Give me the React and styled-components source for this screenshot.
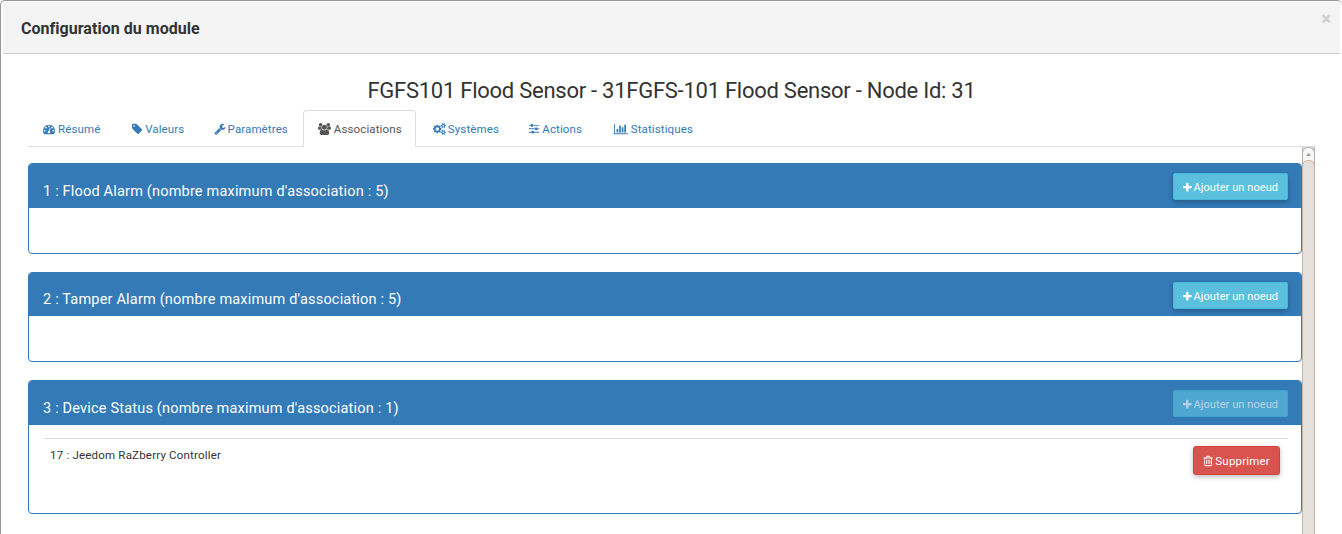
import React from 'react';
import styled, { createGlobalStyle } from 'styled-components';

const GlobalStyle = createGlobalStyle`
  * { box-sizing: border-box; }
  body {
    margin: 0;
    overflow: hidden;
    background: #fff;
    color: #333;
    font: 12px/17px Roboto, sans-serif;
  }
  h1, h2, h3, ul { margin: 0; padding: 0; font-weight: 400; }
`;

const icons = {
  plus: [1408, 'M1408 736v192q0 40-28 68t-68 28h-416v416q0 40-28 68t-68 28h-192q-40 0-68-28t-28-68v-416h-416q-40 0-68-28t-28-68v-192q0-40 28-68t68-28h416v-416q0-40 28-68t68-28h192q40 0 68 28t28 68v416h416q40 0 68 28t28 68z'],
  tag: [1664, 'M448 448q0-53-37.5-90.5t-90.5-37.5-90.5 37.5-37.5 90.5 37.5 90.5 90.5 37.5 90.5-37.5 37.5-90.5zm1067 576q0 53-37 90l-491 492q-39 37-91 37-53 0-90-37l-715-716q-38-37-64.5-101t-26.5-117v-416q0-52 38-90t90-38h416q53 0 117 26.5t102 64.5l715 714q37 39 37 91z'],
  wrench: [1728, 'M448 1472q0-26-19-45t-45-19-45 19-19 45 19 45 45 19 45-19 19-45zm644-420l-682 682q-37 37-90 37-52 0-91-37l-106-108q-38-36-38-90 0-53 38-91l681-681q39 98 114.5 173.5t173.5 114.5zm634-435q0 39-23 106-47 134-164.5 217.5t-258.5 83.5q-185 0-316.5-131.5t-131.5-316.5 131.5-316.5 316.5-131.5q58 0 121.5 16.5t107.5 46.5q16 11 16 28t-16 28l-293 169v224l193 107q5-3 79-48.5t135.5-81 70.5-35.5q15 0 23.5 10t8.5 25z'],
  trash: [1536, 'M576 736v576q0 14-9 23t-23 9h-64q-14 0-23-9t-9-23v-576q0-14 9-23t23-9h64q14 0 23 9t9 23zm256 0v576q0 14-9 23t-23 9h-64q-14 0-23-9t-9-23v-576q0-14 9-23t23-9h64q14 0 23 9t9 23zm256 0v576q0 14-9 23t-23 9h-64q-14 0-23-9t-9-23v-576q0-14 9-23t23-9h64q14 0 23 9t9 23zm128 724v-948h-896v948q0 22 7 40.5t14.5 27 10.5 8.5h832q3 0 10.5-8.5t14.5-27 7-40.5zm-672-1076h448l-48-117q-7-9-17-11h-317q-10 2-17 11zm928 32v64q0 14-9 23t-23 9h-96v948q0 83-47 143.5t-113 60.5h-832q-66 0-113-58.5t-47-141.5v-952h-96q-14 0-23-9t-9-23v-64q0-14 9-23t23-9h309l70-167q15-37 54-63t79-26h320q40 0 79 26t54 63l70 167h309q14 0 23 9t9 23z'],
  sliders: [1536, 'M352 1312v128h-352v-128h352zm352-128q26 0 45 19t19 45v256q0 26-19 45t-45 19h-256q-26 0-45-19t-19-45v-256q0-26 19-45t45-19h256zm160-384v128h-864v-128h864zm-640-512v128h-224v-128h224zm1312 1024v128h-736v-128h736zm-960-1152q26 0 45 19t19 45v256q0 26-19 45t-45 19h-256q-26 0-45-19t-19-45v-256q0-26 19-45t45-19h256zm640 512q26 0 45 19t19 45v256q0 26-19 45t-45 19h-256q-26 0-45-19t-19-45v-256q0-26 19-45t45-19h256zm320 128v128h-224v-128h224zm0-512v128h-864v-128h864z'],
  chart: [2048, 'M640 896v512h-256v-512h256zm384-512v1024h-256v-1024h256zm1024 1152v128h-2048v-1536h128v1408h1920zm-640-896v768h-256v-768h256zm384-384v1152h-256v-1152h256z'],
  users: [1920, 'M593 896q-162 5-265 128h-134q-82 0-138-40.5t-56-118.5q0-353 124-353 6 0 43.5 21t97.5 42.5 119 21.5q67 0 133-23-5 37-5 66 0 159 93 289zm1071 637q0 120-73 189.5t-194 69.5h-874q-121 0-194-69.5t-73-189.5q0-53 3.5-103.5t14-109 26.5-108.5 43-97.5 62-81 85.5-53.5 111.5-20q10 0 43 21.5t73 48 107 48 135 21.5 135-21.5 107-48 73-48 43-21.5q61 0 111.5 20t85.5 53.5 62 81 43 97.5 26.5 108.5 14 109 3.5 103.5zm-1024-1277q0 106-75 181t-181 75-181-75-75-181 75-181 181-75 181 75 75 181zm704 384q0 159-112.5 271.5t-271.5 112.5-271.5-112.5-112.5-271.5 112.5-271.5 271.5-112.5 271.5 112.5 112.5 271.5zm576 225q0 78-56 118.5t-138 40.5h-134q-103-123-265-128 93-130 93-289 0-29-5-66 66 23 133 23 59 0 119-21.5t97.5-42.5 43.5-21q124 0 124 353zm-128-609q0 106-75 181t-181 75-181-75-75-181 75-181 181-75 181 75 75 181z'],
  gauge: [1792, 'M384 1152q0-53-37.5-90.5t-90.5-37.5-90.5 37.5-37.5 90.5 37.5 90.5 90.5 37.5 90.5-37.5 37.5-90.5zm192-448q0-53-37.5-90.5t-90.5-37.5-90.5 37.5-37.5 90.5 37.5 90.5 90.5 37.5 90.5-37.5 37.5-90.5zm428 481l101-382q6-26-7.5-48.5t-38.5-29.5-48 6.5-30 39.5l-101 382q-60 5-107 43.5t-63 98.5q-20 77 20 146t117 89 146-20 89-117q16-60-6-117t-72-91zm660-33q0-53-37.5-90.5t-90.5-37.5-90.5 37.5-37.5 90.5 37.5 90.5 90.5 37.5 90.5-37.5 37.5-90.5zm-640-640q0-53-37.5-90.5t-90.5-37.5-90.5 37.5-37.5 90.5 37.5 90.5 90.5 37.5 90.5-37.5 37.5-90.5zm448 192q0-53-37.5-90.5t-90.5-37.5-90.5 37.5-37.5 90.5 37.5 90.5 90.5 37.5 90.5-37.5 37.5-90.5zm320 448q0 261-141 483-19 29-54 29h-1402q-35 0-54-29-141-221-141-483 0-182 71-348t191-286 286-191 348-71 348 71 286 191 191 286 71 348z'],
  cogs: [1920, 'M896 896q0-106-75-181t-181-75-181 75-75 181 75 181 181 75 181-75 75-181zm768 512q0-52-38-90t-90-38-90 38-38 90q0 53 37.5 90.5t90.5 37.5 90.5-37.5 37.5-90.5zm0-1024q0-52-38-90t-90-38-90 38-38 90q0 53 37.5 90.5t90.5 37.5 90.5-37.5 37.5-90.5zm-384 421v185q0 10-7 19.5t-16 10.5l-155 24q-11 35-32 76 34 48 90 115 7 11 7 20 0 12-7 19-23 30-82.5 89.5t-78.5 59.5q-11 0-21-7l-115-90q-37 19-77 31-11 108-23 155-7 24-30 24h-186q-11 0-20-7.5t-10-17.5l-23-153q-34-10-75-31l-118 89q-7 7-20 7-11 0-21-8-144-133-144-160 0-9 7-19 10-14 41-53t47-61q-23-44-35-82l-152-24q-10-1-17-9.5t-7-19.5v-185q0-10 7-19.5t16-10.5l155-24q11-35 32-76-34-48-90-115-7-11-7-20 0-12 7-20 22-30 82-89t79-59q11 0 21 7l115 90q34-18 77-32 11-108 23-154 7-24 30-24h186q11 0 20 7.5t10 17.5l23 153q34 10 75 31l118-89q8-7 20-7 11 0 21 8 144 133 144 160 0 8-7 19-12 16-42 54t-45 60q23 48 34 82l152 23q10 2 17 10.5t7 19.5zm640 533v140q0 16-149 31-12 27-30 52 51 113 51 138 0 4-4 7-122 71-124 71-8 0-46-47t-52-68q-20 2-30 2t-30-2q-14 21-52 68t-46 47q-2 0-124-71-4-3-4-7 0-25 51-138-18-25-30-52-149-15-149-31v-140q0-16 149-31 13-29 30-52-51-113-51-138 0-4 4-7 4-2 35-20t59-34 30-16q8 0 46 46.5t52 67.5q20-2 30-2t30 2q51-71 92-112l6-2q4 0 124 70 4 3 4 7 0 25-51 138 17 23 30 52 149 15 149 31zm0-1024v140q0 16-149 31-12 27-30 52 51 113 51 138 0 4-4 7-122 71-124 71-8 0-46-47t-52-68q-20 2-30 2t-30-2q-14 21-52 68t-46 47q-2 0-124-71-4-3-4-7 0-25 51-138-18-25-30-52-149-15-149-31v-140q0-16 149-31 13-29 30-52-51-113-51-138 0-4 4-7 4-2 35-20t59-34 30-16q8 0 46 46.5t52 67.5q20-2 30-2t30 2q51-71 92-112l6-2q4 0 124 70 4 3 4 7 0 25-51 138 17 23 30 52 149 15 149 31z'],
};

const Glyph = styled.svg`
  flex: none;
  height: ${(p) => p.$size}px;
  width: ${(p) => (p.$size * p.$ratio)}px;
  fill: currentColor;
`;

function Icon({ name, size = 12 }) {
  const [w, d] = icons[name];
  return (
    <Glyph $size={size} $ratio={w / 1792} viewBox={`0 0 ${w} 1792`}>
      <path d={d} />
    </Glyph>
  );
}

const Dialog = styled.div`
  height: 534px;
  display: flex;
  flex-direction: column;
  border: 1px solid #999;
  border-width: 1px 0 0 1px;
  border-radius: 5px 5px 0 0;
  padding: 1px 2px 0 2px;
  overflow: hidden;
`;

const Header = styled.header`
  flex: none;
  height: 52px;
  display: flex;
  justify-content: space-between;
  background: #f4f4f4;
  border-bottom: 1px solid #ccc;
  border-radius: 4px 4px 0 0;
  padding: 0 9px 0 18px;
`;

const Title = styled.h1`
  font-size: 16px;
  font-weight: 700;
  line-height: 53px;
  letter-spacing: 0.03px;
`;

const Close = styled.span`
  color: #d0d0d0;
  font-size: 18px;
  font-weight: 900;
  line-height: 34px;
`;

const Content = styled.main`
  flex: 1;
  min-height: 0;
  display: flex;
  flex-direction: column;
  padding: 20px 25px 0 25px;
`;

const NodeName = styled.h2`
  font-size: 22px;
  line-height: 34px;
  letter-spacing: -0.26px;
  text-align: center;
  height: 36px;
  flex: none;
`;

const Tabs = styled.nav`
  flex: none;
  display: flex;
  gap: 2px;
  height: 37px;
  border-bottom: 1px solid #ddd;
`;

const Tab = styled.a`
  display: flex;
  align-items: center;
  gap: ${(p) => p.$gap ?? 3}px;
  height: 37px;
  width: ${(p) => p.$width}px;
  padding: 1px 0 0 14px;
  font-size: 11.5px;
  letter-spacing: 0.12px;
  white-space: nowrap;
  color: ${(p) => (p.$active ? '#555' : '#337ab7')};
  background: ${(p) => (p.$active ? '#fff' : 'transparent')};
  border: 1px solid ${(p) => (p.$active ? '#ddd' : 'transparent')};
  border-bottom-color: ${(p) => (p.$active ? '#fff' : 'transparent')};
  border-radius: 4px 4px 0 0;
`;

const ScrollArea = styled.section`
  flex: 1;
  min-height: 0;
  display: flex;
`;

const Groups = styled.div`
  flex: 1;
  display: flex;
  flex-direction: column;
  gap: 18px;
  padding-top: 16px;
`;

const ScrollTrack = styled.div`
  width: 13px;
  background: #e6e0dc;
  border: 1px solid #bdb5ae;
  border-width: 0 1px;
  display: flex;
  flex-direction: column;
`;

const ScrollUp = styled.div`
  height: 16px;
  margin: 0 -1px;
  padding-bottom: 2px;
  display: flex;
  align-items: center;
  justify-content: center;
  background: #f8f7f6;
  border: 1px solid #b5aea8;
  border-bottom: 0;
  border-radius: 6px 6px 0 0;
  color: #999;
`;

const ScrollThumb = styled.div`
  flex: 1;
  margin: -3px -1px 0;
  border: 1px solid #c4b4a8;
  border-top-color: #d9b493;
  border-bottom: 0;
  border-radius: 6px 6px 0 0;
  background: #e6e0dc;
`;

const Panel = styled.article`
  flex: none;
  height: ${(p) => p.$height}px;
  border: 1px solid #337ab7;
  border-radius: 4px;
  overflow: hidden;
`;

const PanelHeading = styled.div`
  height: ${(p) => (p.$compact ? 43 : 44)}px;
  display: flex;
  justify-content: space-between;
  padding: 9px 13px 0 14px;
  background: #337ab7;
  color: #fff;
`;

const PanelTitle = styled.h3`
  font-size: 14.5px;
  line-height: ${(p) => (p.$compact ? 36 : 38)}px;
  letter-spacing: 0.19px;
`;

const Button = styled.button`
  display: flex;
  align-items: center;
  justify-content: center;
  gap: 2px;
  padding: 1px 0 0;
  width: ${(p) => (p.$danger ? 87 : 115)}px;
  height: ${(p) => (p.$danger ? 29 : 27)}px;
  font: ${(p) => (p.$danger ? 11.5 : 11)}px Roboto, sans-serif;
  letter-spacing: ${(p) => (p.$danger ? 0.2 : 0.07)}px;
  color: #fff;
  background: ${(p) => (p.$danger ? '#d9534f' : '#5bc0de')};
  border: 1px solid ${(p) => (p.$danger ? '#d43f3a' : '#46b8da')};
  border-radius: ${(p) => (p.$danger ? 3 : 2)}px;
  box-shadow: 0 2px 5px rgba(0, 0, 0, 0.26);
  &:disabled { opacity: 0.65; box-shadow: none; }
`;

const PanelBody = styled.div`
  padding: 13px 13px 0 14px;
`;

const NodeRow = styled.div`
  display: flex;
  justify-content: space-between;
  border-top: 1px solid #ddd;
  padding: 7px 8px 0 7px;
  font-size: 11.5px;
  line-height: 19px;
  letter-spacing: 0.2px;
`;

const tabs = [
  { icon: 'gauge', label: 'Résumé', width: 87 },
  { icon: 'tag', label: 'Valeurs', width: 80, gap: 2 },
  { icon: 'wrench', label: 'Paramètres', width: 102, gap: 2 },
  { icon: 'users', label: 'Associations', width: 113, active: true },
  { icon: 'cogs', label: 'Systèmes', width: 94, gap: 2 },
  { icon: 'sliders', label: 'Actions', width: 83 },
  { icon: 'chart', label: 'Statistiques', width: 112 },
];

const groups = [
  { id: 1, name: 'Flood Alarm', max: 5, height: 91, nodes: [] },
  { id: 2, name: 'Tamper Alarm', max: 5, height: 90, compact: true, nodes: [] },
  { id: 3, name: 'Device Status', max: 1, height: 134, nodes: ['17 : Jeedom RaZberry Controller'] },
];

export default function App() {
  return (
    <>
      <GlobalStyle />
      <Dialog>
        <Header>
          <Title>Configuration du module</Title>
          <Close>×</Close>
        </Header>
        <Content>
          <NodeName>FGFS101 Flood Sensor - 31FGFS-101 Flood Sensor - Node Id: 31</NodeName>
          <Tabs>
            {tabs.map((t) => (
              <Tab key={t.label} $width={t.width} $gap={t.gap} $active={t.active}>
                <Icon name={t.icon} />
                <span>{t.label}</span>
              </Tab>
            ))}
          </Tabs>
          <ScrollArea>
            <Groups>
              {groups.map((g) => (
                <Panel key={g.id} $height={g.height}>
                  <PanelHeading $compact={g.compact}>
                    <PanelTitle $compact={g.compact}>{`${g.id} : ${g.name} (nombre maximum d'association : ${g.max})`}</PanelTitle>
                    <Button disabled={g.nodes.length >= g.max}>
                      <Icon name="plus" size={11} />
                      <span>Ajouter un noeud</span>
                    </Button>
                  </PanelHeading>
                  <PanelBody>
                    {g.nodes.map((n) => (
                      <NodeRow key={n}>
                        <span>{n}</span>
                        <Button $danger>
                          <Icon name="trash" />
                          <span>Supprimer</span>
                        </Button>
                      </NodeRow>
                    ))}
                  </PanelBody>
                </Panel>
              ))}
            </Groups>
            <ScrollTrack>
              <ScrollUp>
                <svg width="5" height="3" viewBox="0 0 5 3" fill="currentColor"><path d="M0 3 2.5 0 5 3z" /></svg>
              </ScrollUp>
              <ScrollThumb />
            </ScrollTrack>
          </ScrollArea>
        </Content>
      </Dialog>
    </>
  );
}
